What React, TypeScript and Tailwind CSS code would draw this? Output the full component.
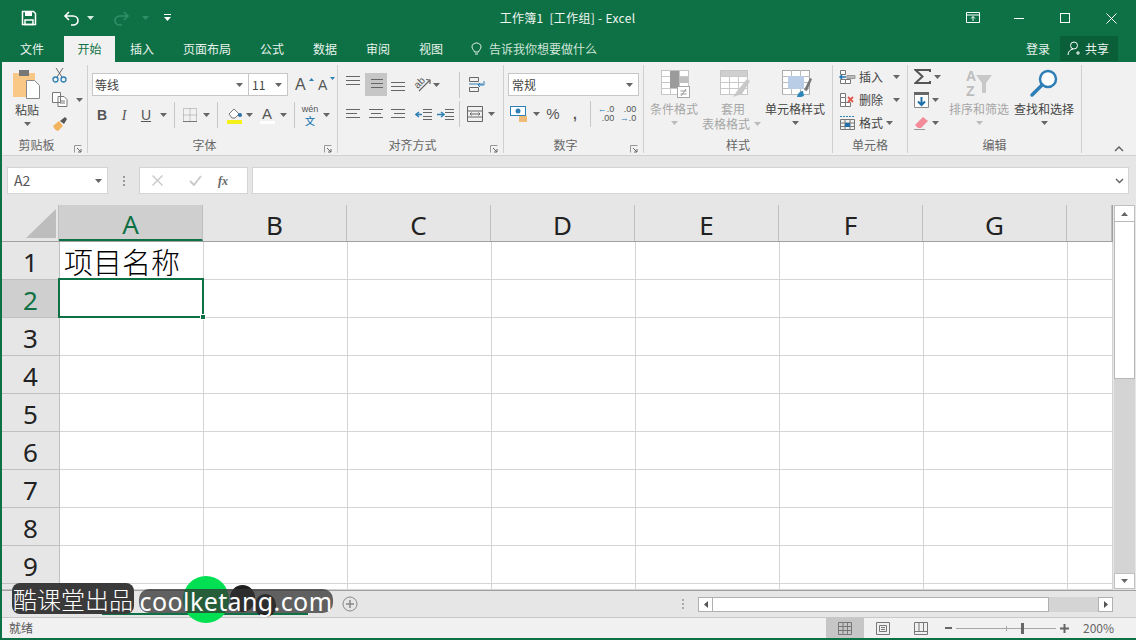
import React from 'react';

const Caret = ({ c = '#666' }: { c?: string }) => (
  <svg width="7" height="4" viewBox="0 0 7 4" className="shrink-0"><path d="M0 0h7L3.5 4z" fill={c} /></svg>
);
const Slot = ({ w, children, cls = '' }: { w: string; children?: React.ReactNode; cls?: string }) => (
  <div className={`flex items-center justify-center shrink-0 h-full ${w} ${cls}`}>{children}</div>
);
const Divider = () => <div className="w-px h-[26px] bg-[#c8c8c8]" />;
const Launcher = () => (
  <svg width="8" height="8" viewBox="0 0 8 8" className="absolute right-[5px] bottom-[1px]">
    <path d="M.5 7.5V.5h7" stroke="#999" fill="none" />
    <path d="M3 3l4 4M7 4v3H4" stroke="#666" fill="none" />
  </svg>
);
const Group = ({ w, children, label, launcher = true }: { w: string; children: React.ReactNode; label: string; launcher?: boolean }) => (
  <div className={`flex flex-col shrink-0 h-[88px] mt-[3px] border-r border-[#d0d0d0] ${w}`}>
    <div className="flex-1 min-h-0">{children}</div>
    <div className={`relative top-[2px] h-[18px] mb-[1px] flex items-center justify-center text-[12px] leading-none text-[#666] ${launcher ? 'pr-[16px]' : ''}`}>
      {label}
      {launcher && <Launcher />}
    </div>
  </div>
);

const Lines = ({ rows }: { rows: number[][] }) => (
  <svg width="16" height="13" viewBox="0 0 16 13">
    {rows.map(([a, b], i) => <path key={i} d={`M${a} ${i * 4 + 1.5}H${b}`} stroke="#666" strokeWidth="1" />)}
  </svg>
);

const BigLabel = ({ t, dim, caret = true, w = 'w-[72px]' }: { t: React.ReactNode[]; dim?: boolean; caret?: boolean; w?: string }) => (
  <div className={`flex flex-col items-center text-[12px] leading-[15px] ${dim ? 'text-[#a6a6a6]' : 'text-[#444]'} ${w}`}>
    {t.map((x, i) => <span key={i} className="whitespace-nowrap">{x}</span>)}
    {caret && <div className="mt-[5px]"><Caret c={dim ? '#bbb' : '#666'} /></div>}
  </div>
);

const GridIcon = ({ dim, kind }: { dim?: boolean; kind: string }) => (
  <svg width="32" height="30" viewBox="0 0 32 30" className="ml-[3px]">
    <rect x="1.5" y="1.5" width="27" height="24" fill="#fff" stroke={dim ? '#c4c4c4' : '#aaa'} />
    {[7, 13, 19, 25].map((y) => <path key={y} d={`M1 ${y + .5}H29`} stroke={dim ? '#c8c8c8' : '#bbb'} />)}
    {[10, 19].map((x) => <path key={x} d={`M${x + .5} 1V26`} stroke={dim ? '#c8c8c8' : '#bbb'} />)}
    {kind === 'cond' && <>
      <path d="M10 2h9v17H10z" fill="#9b9b9b" /><path d="M19 8h9v6h-9z" fill="#c0c0c0" />
      <rect x="17.5" y="17.5" width="12" height="11" fill="#fff" stroke="#a8a8a8" />
      <path d="M20.500 22h6M20.500 25h6M26 20l-5 7" stroke="#999" fill="none" />
    </>}
    {kind === 'table' && <>
      <rect x="2" y="2" width="26" height="5" fill="#cfcfcf" />
      <path d="M14 28l4-6 10-12 3 2-8 13z" fill="#c8c8c8" />
    </>}
    {kind === 'cell' && <>
      <rect x="7" y="7" width="16" height="13" fill="#b9cee6" />
      <path d="M16 28c1-5 4-6 6-6l1 5c-2 1-4 1-7 1z" fill="#2e86b8" />
      <path d="M23 21l6-12 2 1-5 12z" fill="#777" />
    </>}
  </svg>
);

const CellsIcon = ({ kind }: { kind: string }) => (
  <svg width="17" height="16" viewBox="0 0 17 16">
    {kind !== 'format' && <>
      <path d="M1.5 1.5h5v4h-5zM1.5 10.5h5v4h-5zM6.5 10.5h5v4h-5z" fill="#fff" stroke="#777" />
    </>}
    {kind === 'insert' && <>
      <path d="M8 6.5h8v3H8z" fill="#bbb" stroke="#999" />
      <path d="M1 8h6M3 6L1 8l2 2" stroke="#2077b3" strokeWidth="1.5" fill="none" />
    </>}
    {kind === 'delete' && <>
      <path d="M1.5 5.5h5v5h-5z" fill="#fff" stroke="#777" />
      <path d="M9 5l5 5M14 5l-5 5" stroke="#e2574c" strokeWidth="1.8" />
    </>}
    {kind === 'format' && <>
      <path d="M1.5 4.5h14v10h-14zM1 8h15M1 11.500h15M6 4v11M11 4v11" fill="none" stroke="#777" />
      <rect x="6" y="8" width="5" height="4" fill="#1f6fa8" />
      <path d="M1 1.500h15" stroke="#2e86b8" strokeDasharray="2 1" />
    </>}
  </svg>
);

const rowsN = [1, 2, 3, 4, 5, 6, 7, 8, 9, 10];
const cols = ['A', 'B', 'C', 'D', 'E', 'F', 'G', ''];
const colW = ['w-[144px]', 'w-[144px]', 'w-[144px]', 'w-[144px]', 'w-[144px]', 'w-[144px]', 'w-[144px]', 'w-[45px]'];

export default function App() {
  return (
    <div className="relative w-[1136px] h-[640px] overflow-hidden bg-[#e6e6e6] text-[#444] flex flex-col [font-family:'Noto_Sans_CJK_SC','Noto_Sans',sans-serif] border-l-2 border-b-2 border-[#0e7145] select-none">
      {/* Title bar */}
      <div className="h-[36px] -ml-[2px] bg-[#0e7145] flex items-center text-white shrink-0">
        <Slot w="w-[58px]">
          <svg width="16" height="16" viewBox="0 0 16 16"><path d="M1.500 1.500h11l2 2v11h-13z" fill="none" stroke="#fff" strokeWidth="1.500" /><path d="M4 1.500h7v4.500H4z" fill="#fff" /><path d="M4 10h8v4.500H4z" fill="none" stroke="#fff" strokeWidth="1.500" /></svg>
        </Slot>
        <Slot w="w-[26px]">
          <svg width="17" height="15" viewBox="0 0 17 15"><path d="M6 1L2 5l4 4M2 5h8c3 0 5 2 5 4.500S13 14 10 14H8" fill="none" stroke="#fff" strokeWidth="1.600" /></svg>
        </Slot>
        <Slot w="w-[12px]"><Caret c="#d8eee2" /></Slot>
        <Slot w="w-[45px]" cls="ml-[3px]">
          <svg width="17" height="15" viewBox="0 0 17 15"><path d="M11 1l4 4-4 4M15 5H7C4 5 2 7 2 9.500S4 14 7 14h2" fill="none" stroke="#2f8f67" strokeWidth="1.600" /></svg>
        </Slot>
        <Slot w="w-[8px]" cls="-ml-[3px]"><Caret c="#2f8f67" /></Slot>
        <Slot w="w-[7px]" cls="ml-[15px]">
          <svg width="7" height="8" viewBox="0 0 7 8"><path d="M0 .5h7" stroke="#fff" /><path d="M0 3h7L3.500 7z" fill="#fff" /></svg>
        </Slot>
        <div className="flex-1 text-center text-[12px] whitespace-pre text-[#eef6f1] pl-[14px] tracking-[0.3px]">工作簿1  [工作组] - Excel</div>
        <div className="flex items-center h-full pr-[2px] gap-0">
          <Slot w="w-[46px]"><svg width="14" height="12" viewBox="0 0 14 12"><path d="M.500.500h13v10H.5zM1 3h12M7 9V4.500M5 6.500l2-2 2 2" fill="none" stroke="#fff" /></svg></Slot>
          <Slot w="w-[46px]"><div className="w-[10px] h-px bg-white" /></Slot>
          <Slot w="w-[46px]"><div className="w-[10px] h-[10px] border border-white" /></Slot>
          <Slot w="w-[46px]"><svg width="11" height="11" viewBox="0 0 11 11"><path d="M.500.500l10 10M10.500.500l-10 10" stroke="#fff" /></svg></Slot>
        </div>
      </div>
      {/* Tabs */}
      <div className="h-[26px] -ml-[2px] bg-[#0e7145] flex items-stretch text-[12px] leading-none text-[#e8f3ed] shrink-0 pl-[2px]">
        {[['文件', 'w-[60px]'], ['开始', 'w-[51px] ml-[2px]'], ['插入', 'w-[54px]'], ['页面布局', 'w-[76px]'], ['公式', 'w-[54px]'], ['数据', 'w-[52px]'], ['审阅', 'w-[54px]'], ['视图', 'w-[52px]']].map(([t, w]) => (
          <div key={t} className={`flex items-center justify-center ${w} ${t === '开始' ? 'bg-[#f1f1f1] text-[#0e7145]' : ''}`}>{t}</div>
        ))}
        <div className="flex items-center ml-[14px] gap-[7px] text-[#cfe5d9]">
          <svg width="11" height="14" viewBox="0 0 11 14"><path d="M3.500 10C3 8 1 7 1 4.800 1 2.500 3 1 5.500 1S10 2.500 10 4.800C10 7 8 8 7.500 10zM4 12h3" fill="none" stroke="#e8f3ed" /></svg>
          告诉我你想要做什么
        </div>
        <div className="flex-1" />
        <div className="flex items-center mr-[10px]">登录</div>
        <div className="flex items-center w-[58px] h-[25px] bg-[#0b5f38] mr-[18px] pl-[7px] gap-[3px]">
          <svg width="15" height="15" viewBox="0 0 15 15"><circle cx="7" cy="4.500" r="3.500" fill="none" stroke="#fff" /><path d="M1 14c0-3 2-5.500 5-6M11 10v4M9 12h4" fill="none" stroke="#fff" /></svg>
          共享
        </div>
      </div>
      {/* Ribbon */}
      <div className="h-[94px] bg-[#f1f1f1] border-b border-[#d0d0d0] flex shrink-0 items-start">
        {/* Clipboard */}
        <Group w="w-[86px]" label="剪贴板">
          <div className="flex h-full">
            <div className="w-[50px] flex flex-col items-center pt-[4px]">
              <svg width="30" height="30" viewBox="0 0 30 30" className="-ml-[1px]">
                <rect x="1" y="4" width="22" height="24" fill="#f9c887" />
                <rect x="7" y="1" width="10" height="6" fill="#777" />
                <path d="M14.500 11.500h8l5 5v13h-13z" fill="#fff" stroke="#888" />
              </svg>
              <div className="text-[12px] leading-[15px] mt-[3px] text-[#444]">粘贴</div>
              <div className="mt-[5px]"><Caret /></div>
            </div>
            <div className="flex flex-col items-start">
              <svg width="15" height="16" viewBox="0 0 15 16" className="mt-[2px]"><path d="M4 1l6 9M11 1L5 10" stroke="#666" /><circle cx="3.500" cy="12.500" r="2.500" fill="none" stroke="#2e7fb5" strokeWidth="1.300" /><circle cx="11.500" cy="12.500" r="2.500" fill="none" stroke="#2e7fb5" strokeWidth="1.300" /></svg>
              <div className="flex items-center gap-[8px] mt-[9px]">
                <svg width="16" height="15" viewBox="0 0 16 15"><path d="M.500.500h8v10h-8zM6 4.500h6l3 3v7H6z" fill="#fff" stroke="#777" /><path d="M8 9h5M8 11h5" stroke="#777" /></svg>
                <Caret />
              </div>
              <svg width="16" height="16" viewBox="0 0 16 16" className="mt-[9px]"><path d="M1 10l6-5 4 5-5 5c-2 0-4-3-5-5z" fill="#f3b35e" /><path d="M8 5l5-4 2 2-3 5z" fill="#555" /></svg>
            </div>
          </div>
        </Group>
        {/* Font */}
        <Group w="w-[250px]" label="字体">
          <div className="flex items-center h-[23px] mt-[8px] ml-[4px]">
            <div className="w-[157px] h-[23px] bg-white border border-[#c6c6c6] flex items-center justify-between pl-[2px] pr-[5px] text-[12px] text-[#444]">等线<Caret /></div>
            <div className="w-[39px] h-[23px] bg-white border border-[#c6c6c6] border-l-0 flex items-center justify-between pl-[3px] pr-[5px] text-[12px] text-[#444]">11<Caret /></div>
            <div className="ml-[7px] w-[16px] relative text-[16px] text-[#555] leading-none [font-family:'Liberation_Sans',sans-serif]">A<svg width="5" height="3" viewBox="0 0 5 3" className="absolute right-[-3px] top-[1px]"><path d="M0 3h5L2.500 0z" fill="#2e7fb5" /></svg></div>
            <div className="ml-[7px] w-[14px] relative text-[14px] text-[#555] leading-none [font-family:'Liberation_Sans',sans-serif]">A<svg width="5" height="3" viewBox="0 0 5 3" className="absolute right-[-3px] -top-[1px]"><path d="M0 0h5L2.500 3z" fill="#2e7fb5" /></svg></div>
          </div>
          <div className="flex items-center h-[26px] mt-[6px] ml-[3px] text-[#555]">
            <Slot w="w-[22px]"><span className="font-bold text-[14px] [font-family:'Liberation_Sans',sans-serif]">B</span></Slot>
            <Slot w="w-[22px]"><span className="italic text-[14px] [font-family:'Liberation_Serif',serif]">I</span></Slot>
            <Slot w="w-[22px]"><span className="underline font-medium text-[14px] [font-family:'Liberation_Sans',sans-serif]">U</span></Slot>
            <Slot w="w-[12px]"><Caret /></Slot>
            <Slot w="w-[10px]"><Divider /></Slot>
            <Slot w="w-[22px]"><svg width="14" height="14" viewBox="0 0 14 14"><path d="M.500.500h13v13H.5zM.500 7h13M7 .500v13" fill="none" stroke="#999" strokeDasharray="1 1" /><path d="M0 13.500h14" stroke="#777" /></svg></Slot>
            <Slot w="w-[10px]"><Caret /></Slot>
            <Slot w="w-[12px]"><Divider /></Slot>
            <Slot w="w-[22px]"><svg width="17" height="17" viewBox="0 0 17 17"><path d="M3 7l5-5 5 5-4 4H6z" fill="#fff" stroke="#777" /><circle cx="14" cy="8" r="2" fill="#2e6ea5" /><rect x="1" y="13" width="15" height="4" fill="#f4f018" /></svg></Slot>
            <Slot w="w-[8px]"><Caret /></Slot>
            <Slot w="w-[22px]" cls="ml-[3px]"><div className="flex flex-col items-center"><span className="text-[15px] leading-[14px] font-medium [font-family:'Liberation_Sans',sans-serif]">A</span><div className="w-[15px] h-[3px] bg-white" /></div></Slot>
            <Slot w="w-[10px]"><Caret /></Slot>
            <Slot w="w-[12px]"><Divider /></Slot>
            <Slot w="w-[20px]"><div className="flex flex-col items-center"><span className="text-[9px] leading-[11px] [font-family:'Liberation_Sans',sans-serif]">wén</span><span className="text-[10px] leading-[11px] text-[#2e7fb5] font-medium">文</span></div></Slot>
            <Slot w="w-[12px]"><Caret /></Slot>
          </div>
        </Group>
        {/* Align */}
        <Group w="w-[166px]" label="对齐方式">
          <div className="flex items-center h-[23px] mt-[8px]">
            <Slot w="w-[27px]" cls="pl-[3px]"><div className="-mt-[6px]"><Lines rows={[[1, 15], [1, 15], [1, 15]]} /></div></Slot>
            <Slot w="w-[22px]" cls="bg-[#c6c6c6]"><Lines rows={[[3, 15], [3, 15], [3, 15]]} /></Slot>
            <Slot w="w-[20px]" cls="pl-[2px]"><div className="mt-[6px]"><Lines rows={[[1, 15], [1, 15], [1, 15]]} /></div></Slot>
            <Slot w="w-[24px]" cls="ml-[3px] relative">
              <span className="inline-block -rotate-45 text-[10px] leading-[12px] font-medium text-[#555] -mt-[3px] -ml-[4px] [font-family:'Liberation_Sans',sans-serif]">ab</span>
              <svg width="18" height="16" viewBox="0 0 18 16" className="absolute left-[3px] top-[3px]"><path d="M6 15L17 4M13 3.500l4 .5 0 4" fill="none" stroke="#666" strokeWidth="1.200" /></svg>
            </Slot>
            <Slot w="w-[8px]" cls="-ml-[2px]"><Caret /></Slot>
            <Slot w="w-[18px]" cls="ml-[10px]"><Divider /></Slot>
            <Slot w="w-[17px]"><svg width="17" height="17" viewBox="0 0 17 17"><path d="M1.500 1.500h9v4h-9zM1.500 11.500h9v4h-9z" fill="none" stroke="#666" /><path d="M1 8h14M16 5v4h-6M12 7l-2 2 2 2" fill="none" stroke="#2e7fb5" /></svg></Slot>
          </div>
          <div className="flex items-center h-[26px] mt-[5px]">
            <Slot w="w-[27px]" cls="pl-[3px]"><Lines rows={[[1, 15], [1, 12], [1, 15], [1, 12]]} /></Slot>
            <Slot w="w-[22px]"><Lines rows={[[1, 15], [3, 13], [1, 15], [3, 13]]} /></Slot>
            <Slot w="w-[21px]"><Lines rows={[[1, 15], [4, 15], [1, 15], [4, 15]]} /></Slot>
            <Slot w="w-[24px]" cls="ml-[3px]"><svg width="17" height="13" viewBox="0 0 17 13"><path d="M8 1.500h9M8 4.500h9M8 8.500h9M8 11.500h9" stroke="#666" /><path d="M1 6.500h6M4 4L1 6.500 4 9" stroke="#2e7fb5" strokeWidth="1.500" fill="none" /></svg></Slot>
            <Slot w="w-[20px]"><svg width="17" height="13" viewBox="0 0 17 13"><path d="M8 1.500h9M8 4.500h9M8 8.500h9M8 11.500h9" stroke="#666" /><path d="M0 6.500h6M4 4l3 2.500L4 9" stroke="#2e7fb5" strokeWidth="1.500" fill="none" /></svg></Slot>
            <Slot w="w-[8px]"><Divider /></Slot>
            <Slot w="w-[18px]" cls="ml-[3px]"><svg width="16" height="16" viewBox="0 0 16 16"><path d="M.500.500h15v15H.5zM.500 5h15M.500 11h15M3 8h10M4.500 6.500L3 8l1.500 1.500M11.500 6.500L13 8l-1.500 1.500" fill="none" stroke="#666" /></svg></Slot>
            <Slot w="w-[12px]" cls="ml-[1px]"><Caret /></Slot>
          </div>
        </Group>
        {/* Number */}
        <Group w="w-[140px]" label="数字">
          <div className="flex items-center h-[23px] mt-[8px] ml-[4px]">
            <div className="w-[131px] h-[23px] bg-white border border-[#c6c6c6] flex items-center justify-between pl-[3px] pr-[5px] text-[12px] text-[#444]">常规<Caret /></div>
          </div>
          <div className="flex items-center h-[26px] mt-[5px] ml-[4px] text-[#555]">
            <Slot w="w-[22px]"><svg width="18" height="17" viewBox="0 0 18 17"><rect x=".500" y=".500" width="15" height="9" fill="#fff" stroke="#2e7fb5" /><circle cx="8" cy="5" r="2.500" fill="#2e7fb5" /><path d="M9 11h8M9 13h8M9 15h8" stroke="#f0a84f" strokeWidth="1.500" /></svg></Slot>
            <Slot w="w-[12px]"><Caret /></Slot>
            <Slot w="w-[22px]"><span className="text-[15px] [font-family:'Liberation_Sans',sans-serif]">%</span></Slot>
            <Slot w="w-[22px]"><span className="text-[14px] font-bold [font-family:'Liberation_Sans',sans-serif]">,</span></Slot>
            <Slot w="w-[8px]"><Divider /></Slot>
            <Slot w="w-[24px]"><div className="flex flex-col items-end text-[9px] leading-[9px] [font-family:'Liberation_Sans',sans-serif]"><span><span className="text-[#2e7fb5]">←</span>.0</span><span>.00</span></div></Slot>
            <Slot w="w-[20px]"><div className="flex flex-col items-end text-[9px] leading-[9px] [font-family:'Liberation_Sans',sans-serif]"><span>.00</span><span><span className="text-[#2e7fb5]">→</span>.0</span></div></Slot>
          </div>
        </Group>
        {/* Styles */}
        <Group w="w-[189px]" label="样式" launcher={false}>
          <div className="flex pt-[4px]">
            <div className="flex flex-col items-center w-[60px]"><GridIcon dim kind="cond" /><div className="mt-[2px]"><BigLabel t={['条件格式']} dim w="w-[60px]" /></div></div>
            <div className="flex flex-col items-center w-[58px]"><GridIcon dim kind="table" /><div className="mt-[2px] relative"><BigLabel t={['套用', <span className="pr-[14px]">表格格式</span>]} dim caret={false} w="w-[58px]" /><div className="absolute right-[1px] bottom-[5px]"><Caret c="#bbb" /></div></div></div>
            <div className="flex flex-col items-center w-[66px]"><GridIcon kind="cell" /><div className="mt-[2px]"><BigLabel t={['单元格样式']} w="w-[66px]" /></div></div>
          </div>
        </Group>
        {/* Cells */}
        <Group w="w-[75px]" label="单元格" launcher={false}>
          <div className="flex flex-col pl-[6px] text-[12px] leading-none text-[#444]">
            {[['insert', '插入', 'ml-[8px]'], ['delete', '删除', 'ml-[8px]'], ['format', '格式', 'ml-[1px]']].map(([k, t, m]) => (
              <div key={k} className="flex items-center h-[23px] gap-[2px]"><CellsIcon kind={k} /><span className="ml-[1px]">{t}</span><div className={`${m} mt-[1px]`}><Caret /></div></div>
            ))}
          </div>
        </Group>
        {/* Editing */}
        <Group w="w-[174px]" label="编辑" launcher={false}>
          <div className="flex h-full">
            <div className="flex flex-col pl-[6px] w-[48px]">
              <div className="flex items-center h-[23px] gap-[3px]"><svg width="17" height="15" viewBox="0 0 17 15"><path d="M16 3V1H1.500l7 6.500-7 6.500H16v-2" fill="none" stroke="#555" strokeWidth="2" /></svg><Caret /></div>
              <div className="flex items-center h-[23px] gap-[3px]"><svg width="15" height="16" viewBox="0 0 15 16"><path d="M.500.500h14v15H.5z" fill="#fff" stroke="#888" /><rect x="0" y="0" width="15" height="3" fill="#666" /><path d="M7.500 5v8M4 9.500l3.500 3.500L11 9.500" fill="none" stroke="#1f6fa8" strokeWidth="2" /></svg><Caret /></div>
              <div className="flex items-center h-[23px] gap-[3px]"><svg width="15" height="14" viewBox="0 0 15 14"><path d="M1 9l8-8 5 4-7 7H4z" fill="#f48b9b" /><path d="M0 13.500h11" stroke="#999" /></svg><Caret /></div>
            </div>
            <div className="flex flex-col items-center w-[62px] ml-[-8px] pt-[4px]">
              <div className="h-[30px] flex items-start">
                <div className="flex flex-col text-[14px] leading-[15px] font-bold text-[#bcbcbc] [font-family:'Liberation_Sans',sans-serif]"><span>A</span><span>Z</span></div>
                <svg width="16" height="20" viewBox="0 0 16 20" className="mt-[5px]"><path d="M0 1h16l-6 8v10H6V9z" fill="#c8c8c8" /></svg>
              </div>
              <div className="mt-[2px]"><BigLabel t={['排序和筛选']} dim w="w-[62px]" /></div>
            </div>
            <div className="flex flex-col items-center w-[62px] ml-[3px] pt-[4px]">
              <div className="h-[30px]"><svg width="30" height="30" viewBox="0 0 30 30"><circle cx="19" cy="10" r="8" fill="#fff" stroke="#2e7fb5" strokeWidth="2.500" /><path d="M13 16L3 26" stroke="#2e7fb5" strokeWidth="3.500" strokeLinecap="round" /></svg></div>
              <div className="mt-[2px]"><BigLabel t={['查找和选择']} w="w-[62px]" /></div>
            </div>
          </div>
        </Group>
        <div className="flex-1 h-[94px] flex items-end justify-end pb-[4px] pr-[12px]">
          <svg width="10" height="6" viewBox="0 0 10 6"><path d="M1 5l4-4 4 4" fill="none" stroke="#666" strokeWidth="1.500" /></svg>
        </div>
      </div>
      {/* Formula bar */}
      <div className="h-[49px] bg-[#e6e6e6] flex items-center pl-[5px] pr-[5px] shrink-0">
        <div className="w-[101px] h-[27px] bg-white border border-[#d4d4d4] flex items-center justify-between pl-[6px] pr-[5px] text-[14px] text-[#555]">A2<Caret /></div>
        <div className="w-[31px] flex flex-col items-center gap-[2px]">{[0, 1, 2].map((i) => <div key={i} className="w-[2px] h-[2px] bg-[#999]" />)}</div>
        <div className="w-[109px] h-[27px] bg-white border border-[#d4d4d4] flex items-center pl-[12px]">
          <svg width="11" height="11" viewBox="0 0 11 11"><path d="M.500.500l10 10M10.500.500l-10 10" stroke="#c8c8c8" strokeWidth="1.400" /></svg>
          <svg width="13" height="11" viewBox="0 0 13 11" className="ml-[26px]"><path d="M1 6l4 4 7-9" stroke="#c8c8c8" strokeWidth="1.800" fill="none" /></svg>
          <span className="ml-[16px] italic text-[12px] font-bold text-[#666] [font-family:'Liberation_Serif',serif]">fx</span>
        </div>
        <div className="ml-[4px] w-[877px] h-[27px] bg-white border border-[#d4d4d4] flex items-center justify-end pr-[4px]">
          <svg width="9" height="6" viewBox="0 0 9 6"><path d="M1 1l3.500 3.500L8 1" fill="none" stroke="#666" strokeWidth="1.500" /></svg>
        </div>
      </div>
      {/* Sheet */}
      <div className="flex h-[385px] shrink-0 bg-white">
        <div className="w-[1110px] shrink-0 flex flex-col relative">
          <div className="flex h-[37px] shrink-0 border-b border-[#a0a0a0] bg-[#e6e6e6]">
            <div className="w-[58px] h-full flex items-end justify-end pr-[2px] pb-[3px] border-r border-[#c0c0c0]">
              <svg width="30" height="29" viewBox="0 0 30 29"><path d="M30 0v29H0z" fill="#bdbdbd" /></svg>
            </div>
            {cols.map((c, i) => (
              <div key={i} className={`${colW[i]} shrink-0 h-full flex items-center justify-center text-[26px] leading-none pt-[4px] [font-family:'Noto_Sans',sans-serif] border-r border-[#bfbfbf] ${i === 0 ? 'bg-[#cfcfcf] text-[#0e7145] border-b-2 border-b-[#0e7145]' : 'text-[#222]'}`}>{c}</div>
            ))}
          </div>
          <div className="flex-1 min-h-0 flex flex-col">
            {rowsN.map((r) => (
              <div key={r} className={`flex ${r === 10 ? 'flex-1 min-h-0' : 'h-[38px] shrink-0'}`}>
                <div className={`w-[58px] shrink-0 border-r border-b border-[#c0c0c0] flex items-center justify-center text-[26px] leading-none [font-family:'Noto_Sans',sans-serif] pt-[3px] ${r === 2 ? 'bg-[#cfcfcf] text-[#0e7145]' : 'bg-[#e6e6e6] text-[#222]'}`}>{r < 10 ? r : ''}</div>
                {cols.map((_, i) => (
                  <div key={i} className={`${colW[i]} shrink-0 border-r border-b border-[#d4d4d4] ${i === 0 && r === 1 ? 'flex items-center text-[29px] leading-[36px] font-light text-black pl-[4px] whitespace-nowrap' : ''}`}>{i === 0 && r === 1 ? '项目名称' : null}</div>
                ))}
              </div>
            ))}
          </div>
          {/* selection */}
          <div className="absolute left-[56px] top-[73px] w-[146px] h-[40px] border-2 border-[#0e7145]">
            <div className="absolute right-[-4px] bottom-[-4px] w-[6px] h-[6px] bg-[#0e7145] border border-white" />
          </div>
        </div>
        <div className="flex-1 bg-[#e6e6e6] border-l border-[#a0a0a0] flex flex-col px-[1px] pb-[1px]">
          <div className="h-[17px] bg-white border border-[#c0c0c0] flex items-center justify-center"><svg width="7" height="4" viewBox="0 0 7 4"><path d="M0 4h7L3.500 0z" fill="#666" /></svg></div>
          <div className="h-[158px] bg-white border border-[#b8b8b8] -mt-px" />
          <div className="flex-1 bg-[#d4d4d4]" />
          <div className="h-[16px] bg-white border border-[#c0c0c0] flex items-center justify-center"><Caret /></div>
        </div>
      </div>
      {/* Sheet tabs + scroll */}
      <div className="h-[27px] shrink-0 bg-[#e6e6e6] border-t border-[#a0a0a0] flex items-center relative">
        <div className="ml-[100px] w-[206px] h-[23px] -mt-[2px] border-b-2 border-[#0e7145]" />
        <svg width="16" height="16" viewBox="0 0 16 16" className="ml-[34px]"><circle cx="8" cy="8" r="7" fill="none" stroke="#888" /><path d="M4 8h8M8 4v8" stroke="#888" strokeWidth="1.500" /></svg>
        <div className="ml-[324px] flex flex-col gap-[2px]">{[0, 1, 2].map((i) => <div key={i} className="w-[2px] h-[2px] bg-[#aaa]" />)}</div>
        <div className="ml-[14px] w-[415px] h-[15px] bg-[#d4d4d4] flex items-stretch">
          <div className="w-[15px] bg-white border border-[#b0b0b0] flex items-center justify-center"><svg width="4" height="7" viewBox="0 0 4 7"><path d="M4 0v7L0 3.500z" fill="#555" /></svg></div>
          <div className="w-[336px] bg-white border border-[#b0b0b0] border-l-0" />
          <div className="flex-1" />
          <div className="w-[15px] bg-white border border-[#b0b0b0] flex items-center justify-center"><svg width="4" height="7" viewBox="0 0 4 7"><path d="M0 0v7l4-3.500z" fill="#555" /></svg></div>
        </div>
      </div>
      {/* Status bar */}
      <div className="flex-1 bg-[#f1f1f1] border-t border-[#c8c8c8] flex items-stretch text-[12px] leading-none text-[#555]">
        <div className="flex items-center pl-[7px] w-[824px]">就绪</div>
        <Slot w="w-[38px]" cls="bg-[#c6c6c6]"><svg width="14" height="13" viewBox="0 0 14 13"><path d="M.500.500h13v12H.5zM.500 4.500h13M.500 8.500h13M5 .500v12M9.500.500v12" fill="none" stroke="#777" /></svg></Slot>
        <Slot w="w-[38px]"><svg width="14" height="13" viewBox="0 0 14 13"><path d="M.500.500h13v12H.5zM3.500 3.500h7v6h-7zM5 5.500h4M5 7.500h4" fill="none" stroke="#777" /></svg></Slot>
        <Slot w="w-[38px]"><svg width="14" height="13" viewBox="0 0 14 13"><path d="M.500.500h13v12H.5zM.500 9.500h13M5 .500v9M9.500.500v9" fill="none" stroke="#777" /></svg></Slot>
        <div className="flex items-center ml-[5px]">
          <div className="w-[7px] h-[2px] bg-[#666]" />
          <div className="relative w-[100px] h-px bg-[#a8a8a8] ml-[4px]">
            <div className="absolute left-[50px] -top-[2px] w-px h-[5px] bg-[#a8a8a8]" />
            <div className="absolute left-[65px] -top-[5px] w-[3px] h-[11px] bg-[#666]" />
          </div>
          <svg width="9" height="9" viewBox="0 0 9 9" className="ml-[4px]"><path d="M0 4.500h9M4.500 0v9" stroke="#666" strokeWidth="2" /></svg>
          <span className="ml-[14px] text-[12px] text-[#666]">200%</span>
        </div>
      </div>
      {/* Watermark */}
      <div className="absolute left-[181px] top-[576px] w-[46px] h-[47px] rounded-full bg-[#00e052]" />
      <div className="absolute left-[228px] top-[585px] w-[25px] h-[27px] rounded-full bg-[#1e1e1e]" />
      <div className="absolute left-[253px] top-[594px] w-[21px] h-[23px] rounded-full bg-[#1e1e1e]" />
      <div className="absolute left-[10px] top-[583px] w-[122px] h-[31px] rounded-[8px] bg-[#3a3a3a] flex items-center justify-center text-white text-[24px] leading-none whitespace-nowrap font-light">酷课堂出品</div>
      <div className="absolute left-[137px] top-[589px] w-[194px] h-[24px] rounded-[10px] bg-[#333]/75 flex items-center justify-center text-white text-[25px] leading-none whitespace-nowrap [font-family:'Noto_Sans',sans-serif] tracking-[0.4px]">coolketang.com</div>
    </div>
  );
}
